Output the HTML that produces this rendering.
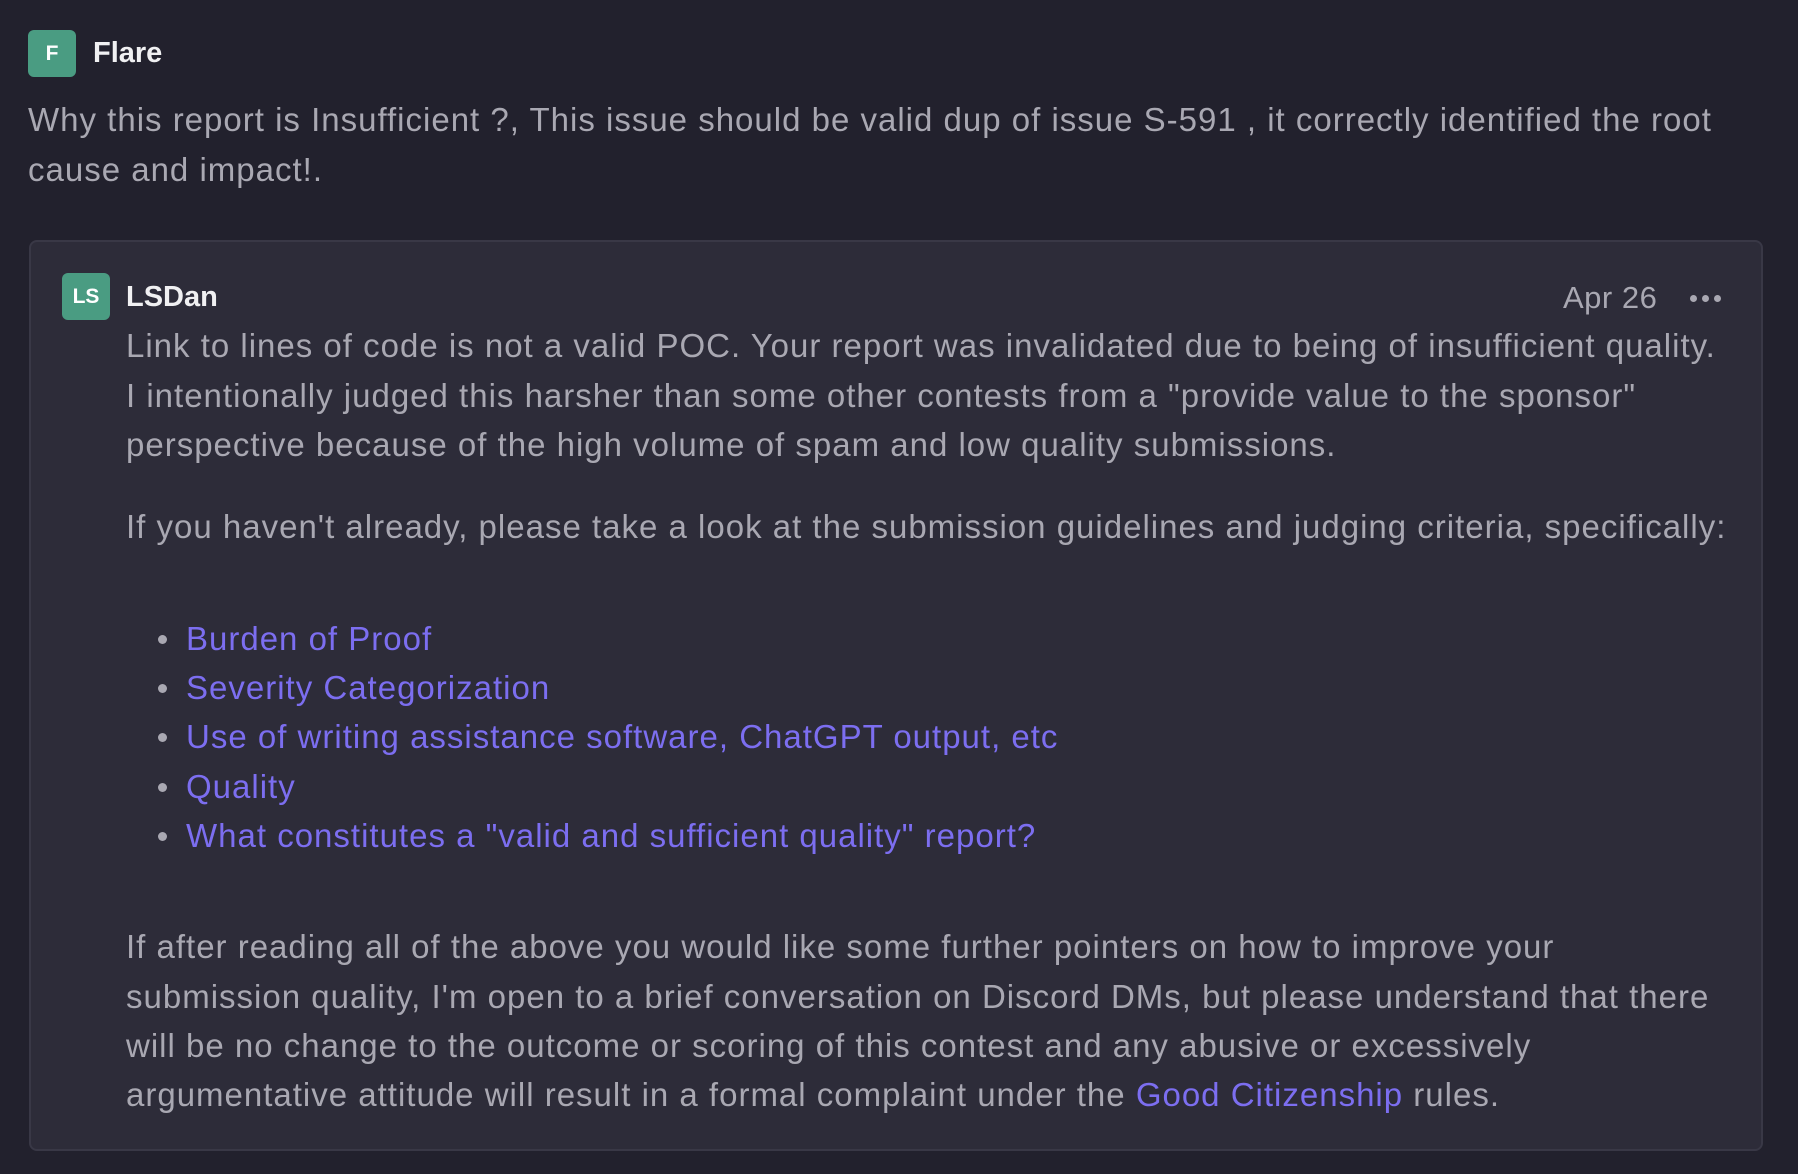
<!DOCTYPE html>
<html><head><meta charset="utf-8"><style>
html,body{margin:0;padding:0;}
body{width:1798px;height:1174px;background:#22212d;font-family:"Liberation Sans",sans-serif;position:relative;overflow:hidden;color:#a9a8b2;}
.abs{position:absolute;white-space:nowrap;}
.av{position:absolute;width:48px;height:47px;border-radius:6px;background:#4a9c82;color:#fff;font-size:21px;font-weight:bold;display:flex;align-items:center;justify-content:center;}
.name{color:#f0f0f2;font-weight:bold;font-size:29px;}
.t{font-size:33px;line-height:33px;letter-spacing:1px;}
a{color:#7c6ef0;text-decoration:none;}
.card{position:absolute;left:29px;top:240px;width:1734px;height:911px;background:#2d2c39;border:2px solid #393846;border-radius:8px;box-sizing:border-box;}
.dot{position:absolute;width:9px;height:9px;border-radius:50%;background:#a9a8b2;}
</style></head><body>
<div class="av" style="left:28px;top:30px;">F</div>
<div class="abs name" style="left:93px;top:37px;">Flare</div>
<div class="abs t" style="left:28px;top:103px;">Why this report is Insufficient ?, This issue should be valid dup of issue S-591 , it correctly identified the root</div>
<div class="abs t" style="left:28px;top:153px;">cause and impact!.</div>
<div class="card"></div>
<div class="av" style="left:62px;top:273px;">LS</div>
<div class="abs name" style="left:126px;top:281px;">LSDan</div>
<div class="abs" style="left:1563px;top:280px;font-size:31px;letter-spacing:0.5px;color:#a9a8b2;">Apr 26</div>
<div class="dot" style="left:1690px;top:295px;width:7px;height:7px;"></div>
<div class="dot" style="left:1702px;top:295px;width:7px;height:7px;"></div>
<div class="dot" style="left:1714px;top:295px;width:7px;height:7px;"></div>
<div class="abs t" style="left:126px;top:329px;">Link to lines of code is not a valid POC. Your report was invalidated due to being of insufficient quality.</div>
<div class="abs t" style="left:126px;top:379px;">I intentionally judged this harsher than some other contests from a "provide value to the sponsor"</div>
<div class="abs t" style="left:126px;top:428px;">perspective because of the high volume of spam and low quality submissions.</div>
<div class="abs t" style="left:126px;top:510px;">If you haven't already, please take a look at the submission guidelines and judging criteria, specifically:</div>
<div class="dot" style="left:158px;top:635px;"></div>
<div class="abs t" style="left:186px;top:622px;"><a>Burden of Proof</a></div>
<div class="dot" style="left:158px;top:684px;"></div>
<div class="abs t" style="left:186px;top:671px;"><a>Severity Categorization</a></div>
<div class="dot" style="left:158px;top:733px;"></div>
<div class="abs t" style="left:186px;top:720px;"><a>Use of writing assistance software, ChatGPT output, etc</a></div>
<div class="dot" style="left:158px;top:783px;"></div>
<div class="abs t" style="left:186px;top:770px;"><a>Quality</a></div>
<div class="dot" style="left:158px;top:832px;"></div>
<div class="abs t" style="left:186px;top:819px;"><a>What constitutes a "valid and sufficient quality" report?</a></div>
<div class="abs t" style="left:126px;top:930px;">If after reading all of the above you would like some further pointers on how to improve your</div>
<div class="abs t" style="left:126px;top:980px;">submission quality, I'm open to a brief conversation on Discord DMs, but please understand that there</div>
<div class="abs t" style="left:126px;top:1029px;">will be no change to the outcome or scoring of this contest and any abusive or excessively</div>
<div class="abs t" style="left:126px;top:1078px;">argumentative attitude will result in a formal complaint under the <a>Good Citizenship</a> rules.</div>
</body></html>
